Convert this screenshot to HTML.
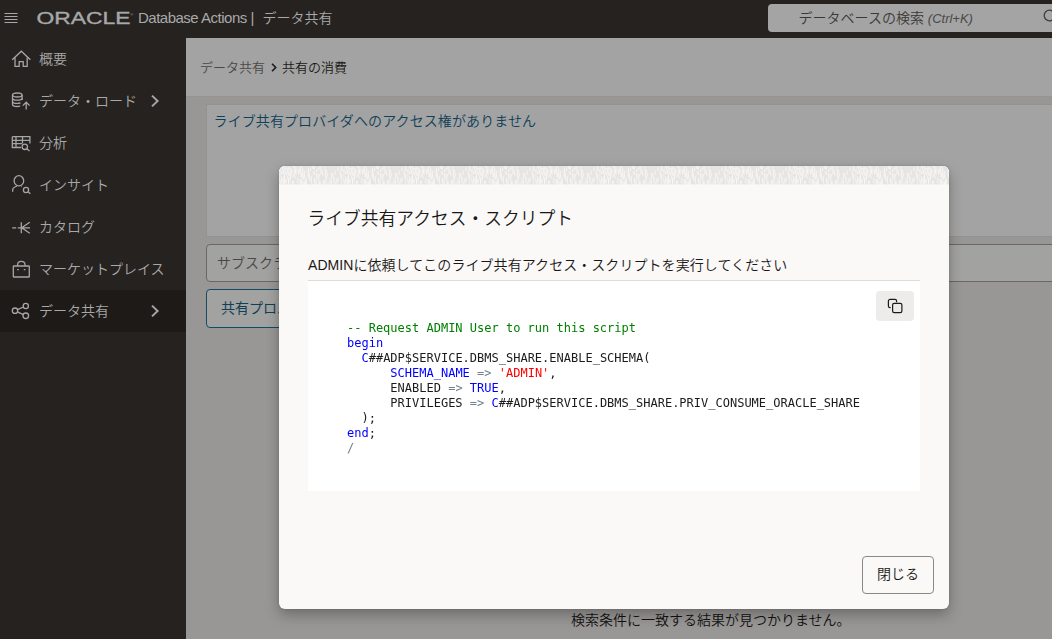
<!DOCTYPE html>
<html lang="ja">
<head>
<meta charset="utf-8">
<title>Database Actions | データ共有</title>
<style>
*{box-sizing:border-box;margin:0;padding:0}
html,body{width:1052px;height:639px;overflow:hidden}
body{position:relative;background:#999796;font-family:"Liberation Sans","Noto Sans CJK JP",sans-serif;color:#161513}
.abs{position:absolute}
/* header */
#hdr{left:0;top:0;width:1052px;height:38px;background:#252220}
#hdr .ttl{left:138px;top:0;height:38px;line-height:36px;font-size:15px;color:#a9a9a9;white-space:nowrap;letter-spacing:-0.5px}
#hdr .ttl b{position:absolute;left:124.4px;top:0;font-weight:350;font-size:14px;letter-spacing:0}
#search{left:768px;top:4px;width:300px;height:28px;border-radius:4px;background:#a4a4a4}
#search span{position:absolute;left:30.6px;top:0;line-height:28.5px;font-size:14px;font-weight:350;color:#3a3836;white-space:nowrap}
#search i{font-size:13px;letter-spacing:0;color:#4b4947}
/* sidebar */
#side{left:0;top:38px;width:186px;height:601px;background:#252220}
.nav{position:absolute;left:0;width:186px;height:42px;color:#a8a8a8;font-size:14px;font-weight:350;line-height:42px;white-space:nowrap}
.nav span{position:absolute;left:39px;top:0}
.nav svg{position:absolute;left:11px;top:11px}
.nav.sel{background:#1d1a18}
#side svg{z-index:2}
/* content */
#crumb{left:186px;top:38px;width:866px;height:59px;background:#a3a3a3;border-bottom:1px solid #959493}
#crumb span{position:absolute;top:0;line-height:59px;font-size:13px;font-weight:350;white-space:nowrap}
#card{left:206px;top:104px;width:860px;height:133px;background:#a3a3a3;border:1px solid #939291}
#card span{position:absolute;left:6.5px;top:5px;font-size:14px;font-weight:350;color:#0f4058;white-space:nowrap;letter-spacing:0.1px}
#inp{left:206px;top:244px;width:860px;height:38px;border:1px solid #6a6866;border-radius:4px;background:#a2a2a1}
#inp span{position:absolute;left:10px;top:0;line-height:36px;font-size:14px;font-weight:350;color:#4a4846;white-space:nowrap}
#btn{left:206px;top:289px;width:200px;height:39px;border:1.5px solid #124c66;border-radius:4px;background:#a2a2a1}
#btn span{position:absolute;left:14px;top:0;line-height:36px;font-size:14px;color:#0f4058;white-space:nowrap}
#nores{left:571px;top:608.6px;font-size:14px;font-weight:350;line-height:22px;color:#131211;white-space:nowrap}
/* dialog */
#dlg{left:279px;top:166px;width:670px;height:443px;border-radius:6px;background:#faf9f8;box-shadow:0 6px 14px rgba(0,0,0,.28),0 0 3px rgba(0,0,0,.12);overflow:hidden}
#strip{left:0;top:0;width:670px;height:19px;background:#faf9f8}
#dttl{left:28.6px;top:38.5px;font-size:17.75px;font-weight:350;line-height:28px;color:#1a1816;white-space:nowrap}
#dsub{left:29px;top:87.8px;font-size:14px;font-weight:350;line-height:22px;color:#1a1816;white-space:nowrap;letter-spacing:0.06px}
#code{left:29px;top:114px;width:612px;height:211px;background:#fff;border-top:1px solid #dedcda}
#code pre{position:absolute;left:39px;top:40px;font-family:"DejaVu Sans Mono","Liberation Mono",monospace;font-size:12px;line-height:15px;color:#1b1b1b;will-change:transform}
.c{color:#008000}.k{color:#0000ff}.s{color:#ff0000}.o{color:#708090}
#copy{left:568px;top:10px;width:38px;height:30px;border-radius:4px;background:#edecea}
#close{left:583px;top:390px;width:72px;height:38px;border:1px solid #8b8886;border-radius:4px;background:#faf9f8;font-size:14px;font-weight:350;line-height:35px;text-align:center;color:#1a1816}
</style>
</head>
<body>
<!-- content -->
<div id="crumb" class="abs"><span style="left:14px;color:#4b4947">データ共有</span><svg class="abs" style="left:84px;top:24px" width="8" height="11" viewBox="0 0 8 11" fill="none" stroke="#1c1a18" stroke-width="1.6"><path d="M2 1.8L5.7 5.5L2 9.2"/></svg><span style="left:96px;color:#1a1816">共有の消費</span></div>
<div id="card" class="abs"><span>ライブ共有プロバイダへのアクセス権がありません</span></div>
<div id="inp" class="abs"><span>サブスクライブ</span></div>
<div id="btn" class="abs"><span>共有プロバイダ</span></div>
<div id="nores" class="abs">検索条件に一致する結果が見つかりません。</div>

<!-- header -->
<div id="hdr" class="abs">
  <svg class="abs" style="left:4px;top:12px" width="15" height="12" viewBox="0 0 15 12"><path d="M0.5 1.5h13M0.5 4.5h13M0.5 7.5h13M0.5 10.5h13" stroke="#a8a8a8" stroke-width="1"/></svg>
  <svg class="abs" style="left:34px;top:8px" width="102" height="20" viewBox="0 0 102 20"><text x="2.5" y="16.1" font-family="Liberation Sans, sans-serif" font-size="16.8" fill="#a8a8a8" stroke="#a8a8a8" stroke-width="0.35" textLength="94" lengthAdjust="spacingAndGlyphs">ORACLE</text><text x="96.6" y="8" font-family="Liberation Sans, sans-serif" font-size="3.5" fill="#a8a8a8">&#174;</text></svg>
  <div class="ttl abs">Database Actions | <b>データ共有</b></div>
  <div id="search" class="abs"><svg class="abs" style="left:270px;top:4px" width="20" height="20" viewBox="0 0 20 20" fill="none" stroke="#3f3d3b" stroke-width="1.3"><circle cx="11.5" cy="7.5" r="5.3"/></svg><span>データベースの検索 <i>(Ctrl+K)</i></span></div>
</div>

<!-- sidebar -->
<div id="side" class="abs">
  <svg class="abs" style="left:0;top:0" width="186" height="340" viewBox="0 0 186 340" fill="none" stroke="#a6a6a6" stroke-width="1.3">
    <!-- home -->
    <path d="M12.2 21.8L21.3 13.2L30.4 21.8"/><path d="M15 19.5V28.3H19.2V23.6H23.2V28.3H27.2V19.5"/>
    <!-- data load -->
    <ellipse cx="17.3" cy="57" rx="4.8" ry="2"/><path d="M12.5 57V66.5C12.5 67.6 14.6 68.5 17.3 68.5C18.5 68.5 19.5 68.3 20.3 68"/><path d="M22.1 57V62"/><path d="M12.5 60.2C12.5 61.3 14.6 62.2 17.3 62.2C20 62.2 22.1 61.3 22.1 60.2"/><path d="M12.5 63.4C12.5 64.5 14.6 65.4 17.3 65.4C18.6 65.4 19.7 65.2 20.5 64.9"/>
    <path d="M26.2 71.5V64.5M22.8 67.6L26.2 64.2L29.6 67.6"/>
    <!-- analysis -->
    <path d="M12.3 98.7H29.9V105.5M12.3 98.7V109.5H21M12.3 102.3H29.9M12.3 105.7H22M16 98.7V109.5M22.5 98.7V105.5"/><circle cx="24.8" cy="108.8" r="2.7"/><path d="M26.8 110.7L29.5 113"/>
    <!-- insight -->
    <ellipse cx="18.9" cy="142.8" rx="4.8" ry="5.1"/><path d="M12.7 153.8V151.6C12.7 150 14 149.3 17 148M21 148.3L21.6 148.6"/><circle cx="26" cy="152" r="2.6"/><path d="M27.9 153.8L30.4 155.8"/>
    <!-- catalog -->
    <path d="M12.2 189.8H16.2M17.8 189.8H30M21.3 184.3V195.3M21.6 189.8L29.8 184.3M21.6 189.8L29.8 195.3"/>
    <!-- marketplace -->
    <rect x="13.3" y="228" width="16" height="11" rx="0.6"/><path d="M17.6 228V226.8C17.6 224.7 19.2 223.4 21.3 223.4C23.4 223.4 25 224.7 25 226.8V228"/><path d="M17.2 231.6H18.8M23.8 231.6H25.4"/>
    <!-- share -->
    <circle cx="15" cy="272.7" r="2.7"/><circle cx="25.8" cy="268" r="2.6"/><circle cx="25.8" cy="277.8" r="2.8"/><path d="M17.5 271.6L23.4 269M17.5 273.9L23.3 276.6"/>
    <!-- chevrons -->
    <path d="M152 57.6L157.6 63L152 68.4" stroke-width="2"/><path d="M152 267.6L157.6 273L152 278.4" stroke-width="2"/>
  </svg>
  <div class="nav" style="top:0"><span>概要</span></div>
  <div class="nav" style="top:42px"><span>データ・ロード</span></div>
  <div class="nav" style="top:84px"><span>分析</span></div>
  <div class="nav" style="top:126px"><span>インサイト</span></div>
  <div class="nav" style="top:168px"><span>カタログ</span></div>
  <div class="nav" style="top:210px"><span>マーケットプレイス</span></div>
  <div class="nav sel" style="top:252px"><span>データ共有</span></div>
</div>

<!-- dialog -->
<div id="dlg" class="abs">
  <div id="strip" class="abs"><svg class="abs" style="left:0;top:0" width="670" height="19" viewBox="0 0 670 19"><defs><pattern id="tx" width="64" height="19" patternUnits="userSpaceOnUse"><rect width="64" height="19" fill="#e6e5e4"/><path d="M20.7 1.6l-0.7 4.5M34.3 5.2l0.0 2.7M2.4 6.4l-0.7 2.7M27.2 13.1l-0.4 2.9M40.2 15.1l-0.2 4.2M62.5 -0.2l-0.3 5.1M9.2 1.0l0.5 3.4M11.6 8.9l-0.2 4.4M35.1 0.1l-0.5 2.7M43.5 6.3l0.1 3.4M29.0 4.1l0.3 4.9M15.6 8.8l0.6 4.1M46.7 3.9l-0.6 5.4M26.8 11.9l-0.0 3.0M2.5 10.4l0.1 4.8M56.0 4.3l0.2 4.6M37.1 6.8l0.7 5.0M30.3 10.3l0.3 2.7M41.4 15.9l-0.3 5.0M24.7 10.4l-0.1 2.6M10.8 1.0l0.4 2.7M8.3 3.2l0.6 3.7M5.2 6.6l0.6 4.1M52.4 13.7l-0.1 3.3M23.0 14.0l-0.6 5.4M11.3 2.9l-0.0 3.2M37.7 3.5l-0.1 2.5M23.6 8.6l0.3 5.4M33.0 9.5l-0.7 4.5M57.6 12.3l0.5 5.1M25.1 5.8l0.2 2.8M4.0 0.1l-0.5 3.1M21.8 -0.1l-0.6 2.5M6.5 5.2l0.6 2.6M39.3 1.5l-0.2 3.3M23.3 1.1l0.8 5.0M29.8 7.2l-0.6 2.8M21.9 3.5l-0.5 5.0M1.5 15.2l-0.6 4.1M34.8 -0.5l0.8 4.1M55.3 10.8l-0.2 3.3M10.7 12.1l0.4 4.1M21.1 2.8l0.8 4.9M54.6 12.7l0.4 5.0M14.5 7.8l-0.8 3.6M1.8 3.8l0.3 3.3M61.2 6.6l0.8 5.3M61.1 5.2l-0.4 3.2M12.6 2.5l0.6 4.4M53.8 7.2l0.5 4.5M5.4 10.2l0.5 5.2M48.0 7.1l0.5 3.0M21.3 12.6l-0.2 5.4M25.7 15.1l-0.5 4.7M8.1 1.6l0.5 5.2M9.4 13.1l0.3 5.4M22.4 8.3l-0.8 2.9M62.1 10.0l0.7 4.1M27.8 13.8l-0.5 5.0M16.1 4.0l0.1 3.2M16.6 6.1l0.7 2.9M22.6 6.8l0.6 4.3M26.9 14.6l0.1 4.0M33.5 -0.7l-0.5 3.8M0.3 12.6l-0.0 3.0M46.4 8.5l0.0 3.5M35.5 12.3l0.1 2.8M15.9 3.7l0.0 4.8M36.0 11.9l-0.1 5.2M39.2 7.6l0.3 4.0M29.0 8.1l0.7 3.9M44.7 13.9l-0.4 5.3M35.8 15.0l-0.6 5.0M7.8 6.5l-0.4 2.7M4.7 10.4l0.6 4.9M9.9 11.2l-0.6 4.5M56.5 15.4l0.7 3.2M25.5 7.3l0.5 5.5M10.3 6.3l-0.3 4.0M12.5 4.4l-0.8 4.7M35.5 6.5l-0.3 2.6M39.9 7.7l0.8 2.7M50.5 15.5l-0.4 2.8M2.5 12.2l-0.6 3.3M27.0 14.5l-0.4 5.0M9.6 14.6l0.3 4.2M5.7 -0.0l-0.1 4.6M4.6 15.0l0.5 4.4M5.4 13.6l0.6 2.7M29.0 4.8l0.7 4.2M17.1 1.2l-0.4 4.1M7.0 1.7l-0.5 2.7M20.0 4.2l-0.3 4.8M32.0 2.0l-0.8 3.5M16.0 -0.7l0.1 4.7M12.1 7.1l-0.6 5.3M52.4 6.3l0.5 4.0M25.2 7.6l0.8 4.6M21.9 13.1l0.2 4.6M25.9 4.9l-0.6 2.7M4.5 11.6l-0.5 3.3M5.4 13.3l0.3 5.1M18.0 3.1l-0.1 3.4M10.1 6.6l0.7 3.3M62.2 8.3l0.7 3.2M19.8 5.1l-0.2 2.5M30.4 7.5l0.0 3.1M0.3 3.5l-0.2 2.8M2.7 -0.6l-0.4 3.4M37.5 8.0l0.3 4.8M45.8 13.9l-0.3 3.7M63.0 1.5l0.2 4.7M2.8 13.2l0.2 5.2M47.0 12.8l0.0 2.9M32.3 13.2l0.5 4.9M37.4 14.2l0.3 4.5M14.7 -0.5l-0.2 2.9M6.7 13.2l0.2 4.2M40.1 10.6l-0.8 4.0M51.1 11.7l0.1 4.0M42.2 0.1l-0.4 4.7M4.8 3.5l-0.5 4.7M47.3 15.6l-0.2 4.0M30.7 10.6l0.2 4.8M41.1 0.3l-0.4 2.9M47.6 4.2l-0.8 4.2M3.9 3.6l0.3 4.5M43.2 3.9l-0.1 4.0M29.8 1.0l-0.5 5.2M62.6 14.9l-0.1 2.6M52.5 15.5l-0.4 3.8M13.4 15.1l0.1 3.1M9.1 7.9l-0.6 5.4M52.5 7.6l0.3 5.2M14.8 14.3l-0.8 4.0M0.2 7.4l-0.3 3.9M9.0 4.8l0.5 3.4M0.1 11.8l-0.6 5.0M59.3 11.1l-0.3 5.2M23.8 5.7l0.1 5.5M23.1 6.3l-0.7 3.3M6.5 13.2l0.7 3.4M16.0 3.5l-0.5 4.0M23.9 15.3l0.5 5.2M40.4 14.5l0.1 5.3M46.1 -0.2l-0.1 4.7M48.2 10.0l-0.7 3.4M59.3 1.2l-0.3 3.9M19.1 11.6l-0.4 5.4M42.0 4.1l-0.2 4.2" stroke="#f6f5f4" stroke-width="1" fill="none"/></pattern></defs><rect width="670" height="18.4" fill="url(#tx)"/></svg></div>
  <div id="dttl" class="abs">ライブ共有アクセス・スクリプト</div>
  <div id="dsub" class="abs">ADMINに依頼してこのライブ共有アクセス・スクリプトを実行してください</div>
  <div id="code" class="abs">
    <div id="copy" class="abs"><svg class="abs" style="left:10px;top:6px" width="18" height="18" viewBox="0 0 18 18" fill="none" stroke="#1b1b1b" stroke-width="1.2"><path d="M4.6 10.6H4a1.6 1.6 0 0 1-1.6-1.6V4A1.6 1.6 0 0 1 4 2.4h5A1.6 1.6 0 0 1 10.6 4v1.2"/><rect x="6.6" y="6.4" width="9.3" height="9.3" rx="1.7"/></svg></div>
<pre><span class="c">-- Request ADMIN User to run this script</span>
<span class="k">begin</span>
  <span class="k">C</span>##ADP$SERVICE.DBMS_SHARE.ENABLE_SCHEMA(
      <span class="k">SCHEMA_NAME</span> <span class="o">=&gt;</span> <span class="s">'ADMIN'</span>,
      ENABLED <span class="o">=&gt;</span> <span class="k">TRUE</span>,
      PRIVILEGES <span class="o">=&gt;</span> <span class="k">C</span>##ADP$SERVICE.DBMS_SHARE.PRIV_CONSUME_ORACLE_SHARE
  );
<span class="k">end</span>;
<span class="o">/</span></pre>
  </div>
  <div id="close" class="abs">閉じる</div>
</div>
</body>
</html>
